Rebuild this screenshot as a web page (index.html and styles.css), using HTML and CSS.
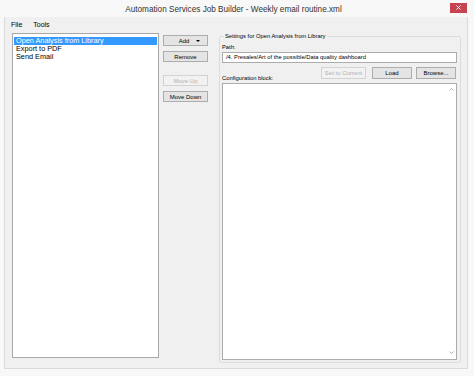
FILE: index.html
```html
<!DOCTYPE html>
<html lang="en">
<head>
    <meta charset="UTF-8">
    <title>Automation Services Job Builder</title>
    <link rel="stylesheet" href="styles.css">
</head>
<body>
    <div class="window">
        <div class="titlebar">
            <span></span>
            <span class="title">Automation Services Job Builder - Weekly email routine.xml</span>
            <div class="close">
                <svg width="5" height="5" viewBox="0 0 5 5"><path d="M0.5 0.5L4.5 4.5M4.5 0.5L0.5 4.5" stroke="#fff" stroke-width="1"/></svg>
            </div>
        </div>
        <div class="client">
            <div class="menubar">
                <span>File</span>
                <span>Tools</span>
            </div>
            <div class="content">
                <div class="list">
                    <div class="item selected">Open Analysis from Library</div>
                    <div class="item">Export to PDF</div>
                    <div class="item">Send Email</div>
                </div>
                <div class="actions">
                    <button class="btn add">Add <svg width="4" height="2" viewBox="0 0 4 2"><path d="M0 0H4L2 2Z" fill="#000"/></svg></button>
                    <button class="btn">Remove</button>
                    <button class="btn gap" disabled>Move Up</button>
                    <button class="btn">Move Down</button>
                </div>
                <fieldset class="settings">
                    <legend>Settings for Open Analysis from Library</legend>
                    <div class="label">Path:</div>
                    <div class="textbox">/4. Presales/Art of the possible/Data quality dashboard</div>
                    <div class="toolrow">
                        <div class="label">Configuration block:</div>
                        <div class="toolbuttons">
                            <button class="btn wide" disabled>Set to Current</button>
                            <button class="btn">Load</button>
                            <button class="btn">Browse...</button>
                        </div>
                    </div>
                    <div class="config">
                        <div class="config-body"></div>
                        <div class="scrollbar">
                            <svg width="5" height="3" viewBox="0 0 5 3"><path d="M0.5 2.5L2.5 0.5L4.5 2.5" fill="none" stroke="#b0b0b0" stroke-width="1"/></svg>
                            <svg width="5" height="3" viewBox="0 0 5 3"><path d="M0.5 0.5L2.5 2.5L4.5 0.5" fill="none" stroke="#b0b0b0" stroke-width="1"/></svg>
                        </div>
                    </div>
                </fieldset>
            </div>
        </div>
    </div>
</body>
</html>
```

FILE: styles.css
```css
:root{
    --frame: #f8f8f8;
    --face: #f0f0f0;
    --edge: #dadada;
    --ui-font: "Liberation Sans", Arial, sans-serif;
}
*{
    box-sizing: border-box;
}
html, body{
    margin: 0;
    height: 100%;
}
body{
    background: var(--frame);
    font-family: var(--ui-font);
    font-size: 7px;
    color: #000;
}
.window{
    width: 474px;
    height: 376px;
    display: flex;
    flex-direction: column;
}
.titlebar{
    height: 17px;
    display: grid;
    grid-template-columns: minmax(0, 1fr) auto minmax(0, 1fr);
    align-items: center;
    padding-right: 7px;
}
.title{
    font-size: 8.2px;
    color: #333;
    padding-top: 1px;
}
.close{
    justify-self: end;
    width: 17px;
    height: 10px;
    background: #c7434f;
    display: flex;
    align-items: center;
    justify-content: center;
    margin-top: -2px;
}
.client{
    margin: 0 6px 0 4px;
    height: 352px;
    background: var(--face);
    border: 1px solid var(--edge);
    border-top: none;
    display: flex;
    flex-direction: column;
}
.menubar{
    height: 14px;
    display: flex;
    align-items: center;
    gap: 11px;
    padding-left: 6px;
    font-size: 7px;
}
.content{
    display: flex;
    padding-left: 7px;
    padding-top: 2px;
}
.list{
    width: 147px;
    height: 325px;
    background: #fff;
    border: 1px solid #a8a8a8;
    padding: 2px 1px;
}
.item{
    height: 8px;
    line-height: 8px;
    padding-left: 2px;
    font-size: 7.3px;
    white-space: nowrap;
}
.selected{
    margin-top: 1px;
    background: #3399ff;
    color: #fff;
}
.actions{
    display: flex;
    flex-direction: column;
    gap: 5px;
    margin-left: 4px;
    padding-top: 2px;
}
.btn{
    width: 45px;
    height: 11px;
    padding: 0;
    border: 1px solid #adadad;
    background: #e4e4e4;
    font-family: var(--ui-font);
    font-size: 6px;
    color: #000;
    display: flex;
    align-items: center;
    justify-content: center;
    gap: 7px;
}
.btn:disabled{
    border-color: #d3d3d3;
    background: #f2f2f2;
    color: #b0b0b0;
}
.add{
    padding-left: 8px;
}
.gap{
    margin-top: 8px;
}
.settings{
    margin: 0 0 0 11px;
    padding: 5px 3px 2px 2px;
    width: 242px;
    height: 330px;
    border: 1px solid #dcdcdc;
    border-radius: 2px;
    display: flex;
    flex-direction: column;
}
.settings legend{
    padding: 0 1px;
    margin-left: 2px;
    font-size: 5.8px;
    line-height: 6px;
}
.label{
    font-size: 5.8px;
    line-height: 7px;
}
.textbox{
    margin-top: 1px;
    height: 11px;
    background: #fff;
    border: 1px solid #acacac;
    padding-left: 3px;
    font-size: 5.8px;
    line-height: 9px;
    white-space: nowrap;
}
.toolrow{
    display: flex;
    align-items: flex-end;
    justify-content: space-between;
    margin-top: 4px;
}
.toolrow .label{
    margin-bottom: -3px;
}
.toolbuttons{
    display: flex;
    gap: 4px;
    padding-right: 1px;
}
.toolbuttons .btn{
    width: 40px;
    height: 12px;
}
.toolbuttons .wide{
    width: 45px;
    margin-right: 2px;
}
.config{
    margin-top: 4px;
    flex: 1;
    background: #fff;
    border: 1px solid #acacac;
    display: flex;
}
.config-body{
    flex: 1;
}
.scrollbar{
    width: 9px;
    display: flex;
    flex-direction: column;
    justify-content: space-between;
    align-items: center;
    padding: 4px 0 5px;
}
```
